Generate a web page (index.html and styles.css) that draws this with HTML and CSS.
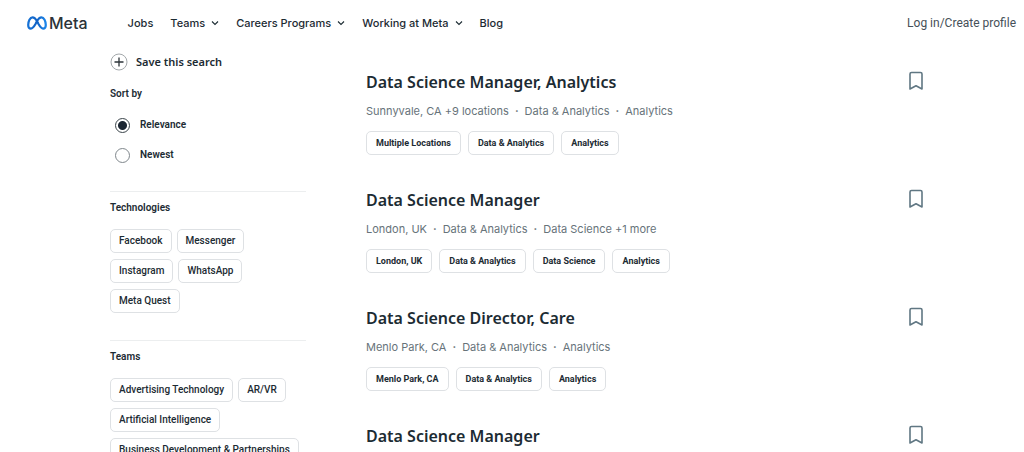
FILE: index.html
```
<!DOCTYPE html>
<html lang="en">
<head>
    <meta charset="UTF-8">
    <meta name="viewport" content="width=device-width, initial-scale=1.0">
    <title>Meta Careers</title>
    <link rel="stylesheet" href="styles.css">
</head>
<body>

    <header class="header">
        <a href="#" class="logo">
            <svg class="logo-mark" viewBox="0 0 20 14" fill="none" aria-hidden="true">
                <defs>
                    <linearGradient id="meta-blue" x1="0" y1="0" x2="1" y2="0">
                        <stop offset="0" stop-color="#1672d6"/>
                        <stop offset="0.5" stop-color="#1262c4"/>
                        <stop offset="1" stop-color="#1c86ea"/>
                    </linearGradient>
                </defs>
                <path d="M10 5C8.500 2.500 7.200 1.300 5.600 1.300C3 1.300 1.200 5.300 1.200 9C1.200 11.300 2.200 12.600 3.900 12.600C5.700 12.600 6.800 11 8.500 8L10 5C11.500 2.500 12.800 1.300 14.400 1.300C17 1.300 18.800 5.300 18.800 9C18.800 11.300 17.800 12.600 16.100 12.600C14.300 12.600 13.200 11 11.500 8Z" stroke="url(#meta-blue)" stroke-width="2.200" stroke-linejoin="round"/>
            </svg>
            <span>Meta</span>
        </a>
        <nav class="nav">
            <a href="#">Jobs</a>
            <button type="button">Teams
                <svg class="chevron" viewBox="0 0 8 8" aria-hidden="true"><path d="M1 2.500L4 5.500L7 2.500"/></svg>
            </button>
            <button type="button">Careers Programs
                <svg class="chevron" viewBox="0 0 8 8" aria-hidden="true"><path d="M1 2.500L4 5.500L7 2.500"/></svg>
            </button>
            <button type="button">Working at Meta
                <svg class="chevron" viewBox="0 0 8 8" aria-hidden="true"><path d="M1 2.500L4 5.500L7 2.500"/></svg>
            </button>
            <a href="#">Blog</a>
        </nav>
        <a href="#" class="login">Log in/Create profile</a>
    </header>

    <div class="page">
        <aside class="sidebar">
            <button type="button" class="save-search">
                <svg class="plus" viewBox="0 0 18 18" fill="none" aria-hidden="true">
                    <circle cx="9" cy="9" r="8" stroke="#a3a8ab"/>
                    <path d="M9 4.500V13.500M4.500 9H13.500" stroke="#2b3338" stroke-width="1.300"/>
                </svg>
                Save this search
            </button>

            <fieldset class="sort">
                <legend>Sort by</legend>
                <label><input type="radio" name="sort" value="relevance" checked> Relevance</label>
                <label><input type="radio" name="sort" value="newest"> Newest</label>
            </fieldset>

            <section class="filter">
                <h2>Technologies</h2>
                <div class="filter-tags">
                    <button type="button">Facebook</button>
                    <button type="button">Messenger</button>
                    <button type="button">Instagram</button>
                    <button type="button">WhatsApp</button>
                    <button type="button">Meta Quest</button>
                </div>
            </section>

            <section class="filter">
                <h2>Teams</h2>
                <div class="filter-tags">
                    <button type="button">Advertising Technology</button>
                    <button type="button">AR/VR</button>
                    <button type="button">Artificial Intelligence</button>
                    <button type="button">Business Development &amp; Partnerships</button>
                </div>
            </section>
        </aside>

        <main class="jobs">
            <article class="job">
                <div class="job-info">
                    <h3><a href="#">Data Science Manager, Analytics</a></h3>
                    <p class="meta"><span>Sunnyvale, CA +9 locations</span><span>Data &amp; Analytics</span><span>Analytics</span></p>
                    <div class="tags">
                        <span>Multiple Locations</span>
                        <span>Data &amp; Analytics</span>
                        <span>Analytics</span>
                    </div>
                </div>
                <button type="button" class="bookmark" aria-label="Save job">
                    <svg viewBox="0 0 16 20" aria-hidden="true"><path d="M3.500 1.500H12.500Q14 1.500 14 3V18L8 14.800L2 18V3Q2 1.500 3.500 1.500Z"/></svg>
                </button>
            </article>

            <article class="job">
                <div class="job-info">
                    <h3><a href="#">Data Science Manager</a></h3>
                    <p class="meta"><span>London, UK</span><span>Data &amp; Analytics</span><span>Data Science +1 more</span></p>
                    <div class="tags">
                        <span>London, UK</span>
                        <span>Data &amp; Analytics</span>
                        <span>Data Science</span>
                        <span>Analytics</span>
                    </div>
                </div>
                <button type="button" class="bookmark" aria-label="Save job">
                    <svg viewBox="0 0 16 20" aria-hidden="true"><path d="M3.500 1.500H12.500Q14 1.500 14 3V18L8 14.800L2 18V3Q2 1.500 3.500 1.500Z"/></svg>
                </button>
            </article>

            <article class="job">
                <div class="job-info">
                    <h3><a href="#">Data Science Director, Care</a></h3>
                    <p class="meta"><span>Menlo Park, CA</span><span>Data &amp; Analytics</span><span>Analytics</span></p>
                    <div class="tags">
                        <span>Menlo Park, CA</span>
                        <span>Data &amp; Analytics</span>
                        <span>Analytics</span>
                    </div>
                </div>
                <button type="button" class="bookmark" aria-label="Save job">
                    <svg viewBox="0 0 16 20" aria-hidden="true"><path d="M3.500 1.500H12.500Q14 1.500 14 3V18L8 14.800L2 18V3Q2 1.500 3.500 1.500Z"/></svg>
                </button>
            </article>

            <article class="job">
                <div class="job-info">
                    <h3><a href="#">Data Science Manager</a></h3>
                </div>
                <button type="button" class="bookmark" aria-label="Save job">
                    <svg viewBox="0 0 16 20" aria-hidden="true"><path d="M3.500 1.500H12.500Q14 1.500 14 3V18L8 14.800L2 18V3Q2 1.500 3.500 1.500Z"/></svg>
                </button>
            </article>
        </main>
    </div>

</body>
</html>
```
FILE: styles.css
```
* {
    box-sizing: border-box;
}

body {
    margin: 0;
    background: #fff;
    color: #1c2b33;
    font-family: Roboto, sans-serif;
    font-size: 10px;
    line-height: 16px;
}

a {
    color: inherit;
    text-decoration: none;
}

button {
    padding: 0;
    border: none;
    background: none;
    color: inherit;
    font: inherit;
    cursor: pointer;
}

.header {
    display: flex;
    align-items: center;
    height: 46px;
    padding: 0 8px 0 27px;
    font-family: Inter, sans-serif;
    font-size: 11px;
}

.logo {
    display: flex;
    align-items: center;
    gap: 2px;
    margin-right: 40px;
    font-size: 16px;
    font-weight: 500;
    color: #2b3338;
}

.logo-mark {
    width: 20px;
    height: 14px;
}

.nav {
    display: flex;
    gap: 17px;
    font-weight: 500;
}

.nav button {
    display: flex;
    align-items: center;
    gap: 6px;
}

.chevron {
    width: 8px;
    height: 8px;
    fill: none;
    stroke: #1c2b33;
    stroke-width: 1.1;
}

.login {
    margin-left: auto;
    font-family: Roboto, sans-serif;
    font-size: 12px;
    color: #465058;
}

.page {
    display: flex;
    gap: 60px;
    padding: 0 100px 0 110px;
}

.sidebar {
    flex: 0 0 196px;
    min-width: 0;
    padding-top: 7px;
    font-weight: 600;
}

.save-search {
    display: flex;
    align-items: center;
    gap: 8px;
    font-family: "Noto Sans", sans-serif;
    font-size: 11px;
}

.plus {
    width: 18px;
    height: 18px;
}

.sort {
    margin: 15px 0 28px;
    padding: 0;
    border: none;
}

.sort legend {
    padding: 0;
}

.sort label {
    display: flex;
    align-items: center;
    gap: 10px;
    margin-top: 14px;
    padding-left: 5px;
}

.sort legend + label {
    margin-top: 15px;
}

.sort input {
    appearance: none;
    width: 15px;
    height: 15px;
    margin: 0;
    border: 1px solid #7f878c;
    border-radius: 50%;
}

.sort input:checked {
    border-color: #3a444a;
    background: radial-gradient(circle, #1c2733 4px, #fff 5px);
}

.filter {
    padding: 8px 0 27px;
    border-top: 1px solid #eceeef;
}

.filter h2 {
    margin: 0 0 13px;
    font-size: 10px;
    font-weight: 600;
}

.filter-tags {
    display: flex;
    flex-wrap: wrap;
    gap: 6px 5px;
}

.filter-tags button,
.tags span {
    padding: 3px 8px;
    border: 1px solid #dee1e4;
    border-radius: 5px;
    white-space: nowrap;
}

.filter-tags button {
    font-weight: 500;
}

.jobs {
    flex: 1;
    padding-top: 22px;
}

.job {
    display: flex;
    justify-content: space-between;
    align-items: flex-start;
    padding-bottom: 31px;
}

.job h3 {
    margin: 0 0 5px;
    font-family: "Noto Sans", sans-serif;
    font-size: 16px;
    font-weight: 600;
    line-height: 28px;
}

.meta {
    margin: 0 0 10px;
    font-family: Inter, sans-serif;
    font-size: 11px;
    line-height: 20px;
    color: #67737a;
}

.meta span + span::before {
    content: "·";
    margin: 0 6px;
    font-weight: 700;
}

.tags {
    display: flex;
    flex-wrap: wrap;
    gap: 7px;
    font-size: 9px;
    font-weight: 700;
}

.tags span {
    padding: 3px 9px;
}

.bookmark {
    display: flex;
    padding: 3px 0;
}

.bookmark svg {
    width: 16px;
    height: 20px;
    fill: none;
    stroke: #607783;
    stroke-width: 1.6;
    stroke-linejoin: round;
}
```
